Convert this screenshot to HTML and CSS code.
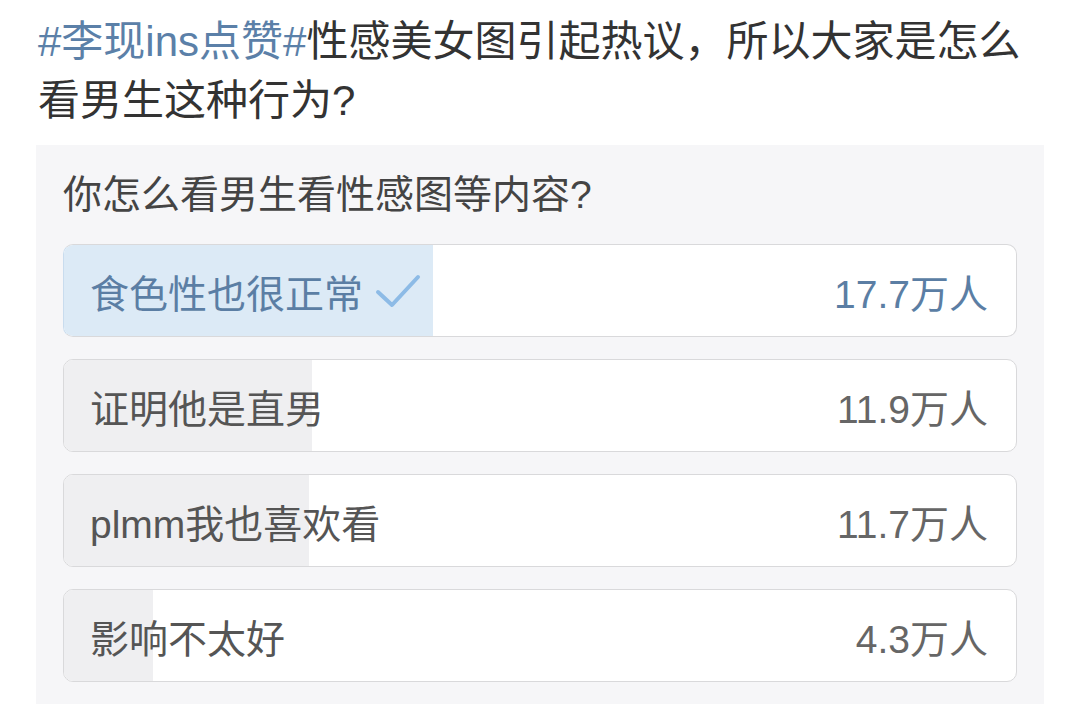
FILE: index.html
```html
<!DOCTYPE html>
<html>
  <head>
    <title>投票</title>
    <link rel="stylesheet" href="styles.css">
  </head>
  <body>
    <h1 class="post-title">
      <span class="topic">#李现ins点赞#</span>性感美女图引起热议，所以大家是怎么<br>看男生这种行为?
    </h1>

    <div class="vote-card">
      <h2 class="vote-question">你怎么看男生看性感图等内容?</h2>

      <div class="vote-option voted">
        <div class="vote-fill" style="width: 38.8%"></div>
        <span class="vote-label">食色性也很正常
          <svg class="vote-check" width="46" height="36" viewBox="0 0 46 36">
            <path d="M3 19 L17 32 L43 4" fill="none" stroke="#8dbbe6" stroke-width="4" stroke-linecap="round" stroke-linejoin="round"/>
          </svg>
        </span>
        <span class="vote-count">17.7万人</span>
      </div>

      <div class="vote-option">
        <div class="vote-fill" style="width: 26.1%"></div>
        <span class="vote-label">证明他是直男</span>
        <span class="vote-count">11.9万人</span>
      </div>

      <div class="vote-option">
        <div class="vote-fill" style="width: 25.7%"></div>
        <span class="vote-label">plmm我也喜欢看</span>
        <span class="vote-count">11.7万人</span>
      </div>

      <div class="vote-option">
        <div class="vote-fill" style="width: 9.4%"></div>
        <span class="vote-label">影响不太好</span>
        <span class="vote-count">4.3万人</span>
      </div>
    </div>
  </body>
</html>
```

FILE: styles.css
```css
body {
  margin: 0;
  background: #fff;
  font-family: "Liberation Sans", "Noto Sans CJK SC", sans-serif;
  color: #333;
}
.post-title {
  margin: 0;
  padding: 12px 20px 0 38px;
  font-size: 42px;
  font-weight: normal;
  line-height: 59px;
  color: #333;
}
.topic {
  color: #5b80a8;
}
.vote-card {
  margin: 15px 36px 0 36px;
  padding: 25px 27px 30px 27px;
  background: #f6f6f8;
}
.vote-question {
  margin: 0 0 24px 0;
  font-size: 39px;
  font-weight: normal;
  line-height: 50px;
  color: #444;
}
.vote-option {
  position: relative;
  display: flex;
  justify-content: space-between;
  align-items: center;
  height: 91px;
  margin-bottom: 22px;
  padding: 0 28px 0 26px;
  background: #fff;
  border: 1px solid #d9d9db;
  border-radius: 10px;
  overflow: hidden;
  font-size: 39px;
  color: #555;
}
.vote-fill {
  position: absolute;
  left: 0;
  top: 0;
  bottom: 0;
  background: #efeff1;
}
.vote-option.voted .vote-fill {
  background: #dceaf6;
}
.vote-option.voted {
  border-color: #c9dcee;
  border-right-color: #d9d9db;
  border-top-color: #d9d9db;
  border-bottom-color: #d9d9db;
  color: #5b7ea4;
}
.vote-label,
.vote-count {
  position: relative;
  display: flex;
  align-items: center;
}
.vote-check {
  margin-left: 12px;
}
.vote-count {
  color: #666;
}
.vote-option.voted .vote-count {
  color: #5b7ea4;
}
```
